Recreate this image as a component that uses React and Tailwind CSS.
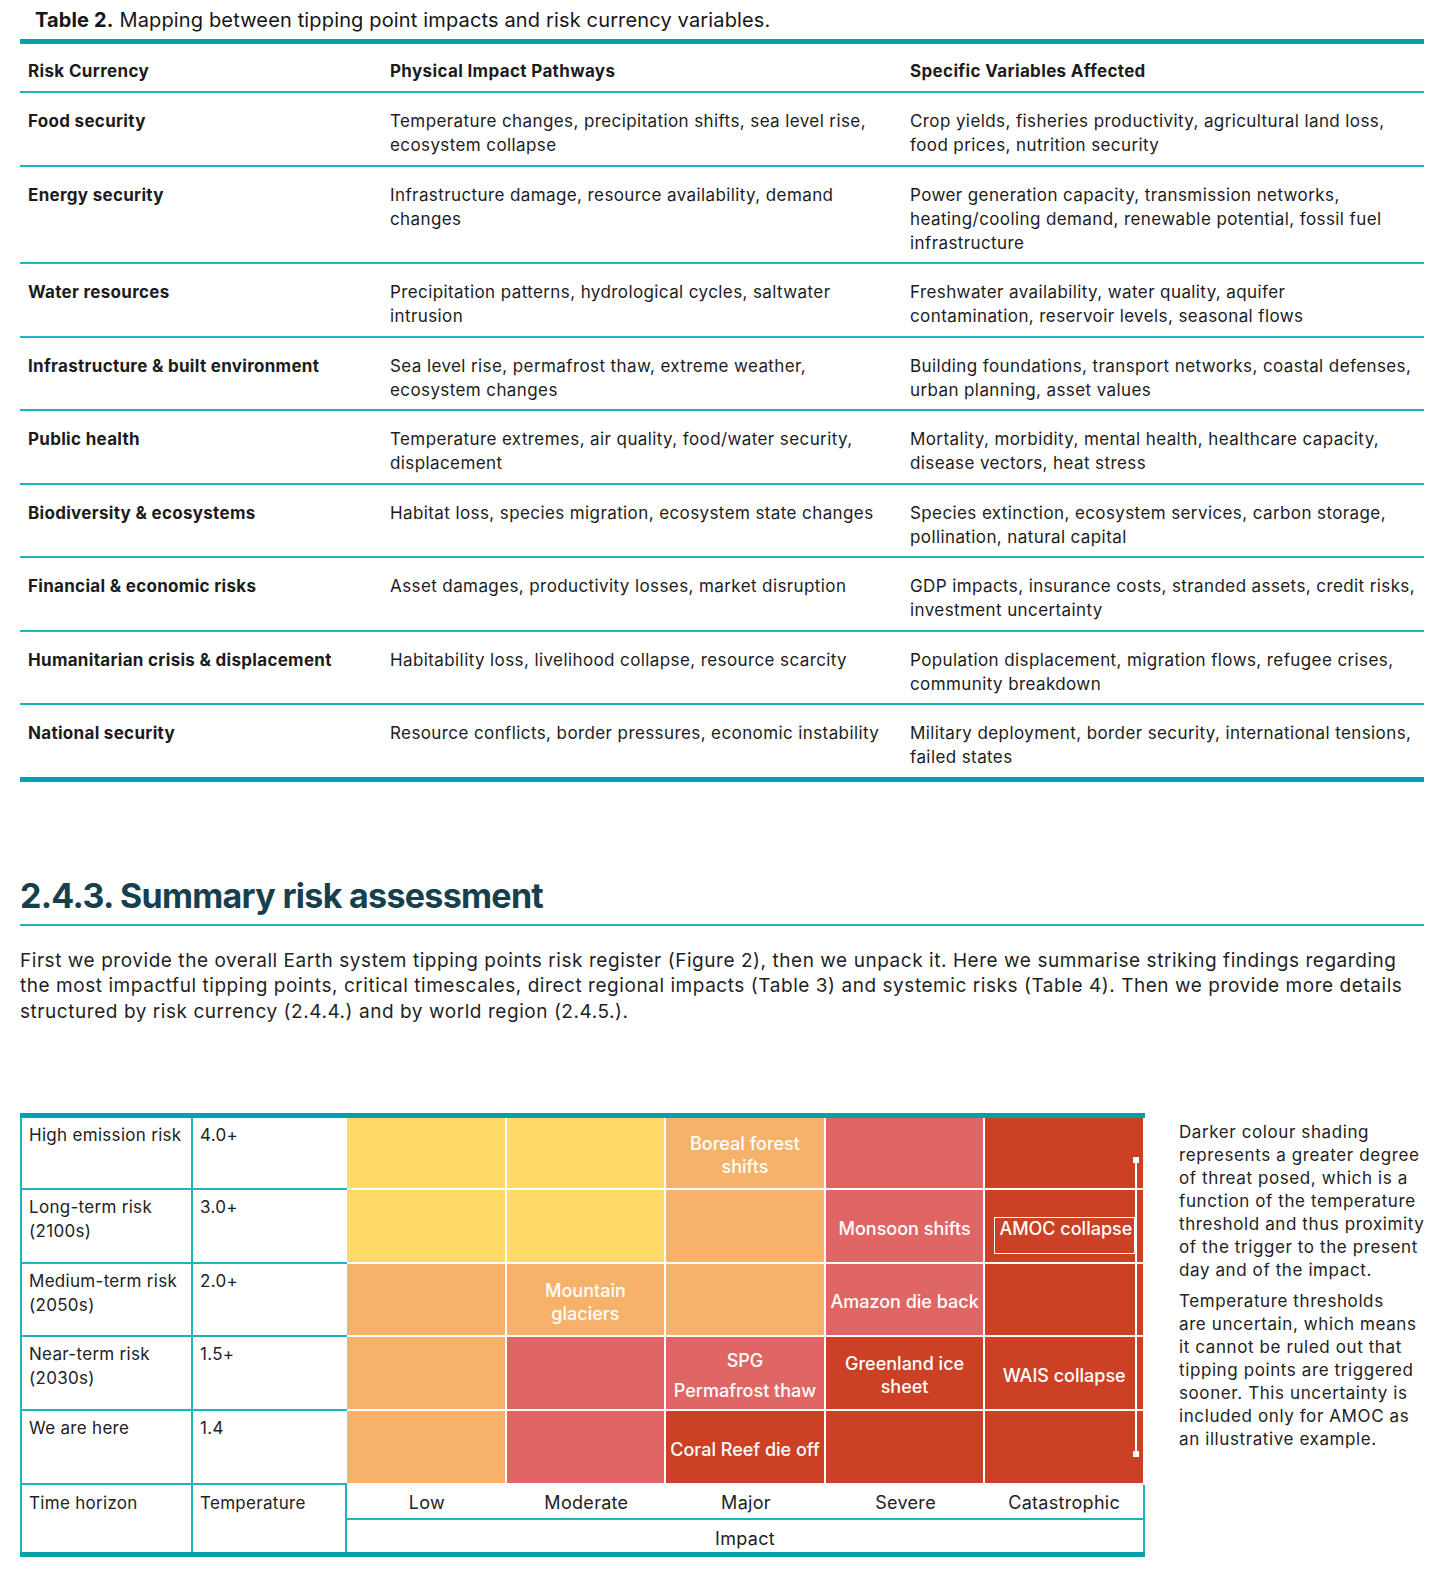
import React from "react";

const rows = [
  ["Food security", ["Temperature changes, precipitation shifts, sea level rise,", "ecosystem collapse"], ["Crop yields, fisheries productivity, agricultural land loss,", "food prices, nutrition security"]],
  ["Energy security", ["Infrastructure damage, resource availability, demand", "changes"], ["Power generation capacity, transmission networks,", "heating/cooling demand, renewable potential, fossil fuel", "infrastructure"]],
  ["Water resources", ["Precipitation patterns, hydrological cycles, saltwater", "intrusion"], ["Freshwater availability, water quality, aquifer", "contamination, reservoir levels, seasonal flows"]],
  ["Infrastructure & built environment", ["Sea level rise, permafrost thaw, extreme weather,", "ecosystem changes"], ["Building foundations, transport networks, coastal defenses,", "urban planning, asset values"]],
  ["Public health", ["Temperature extremes, air quality, food/water security,", "displacement"], ["Mortality, morbidity, mental health, healthcare capacity,", "disease vectors, heat stress"]],
  ["Biodiversity & ecosystems", ["Habitat loss, species migration, ecosystem state changes"], ["Species extinction, ecosystem services, carbon storage,", "pollination, natural capital"]],
  ["Financial & economic risks", ["Asset damages, productivity losses, market disruption"], ["GDP impacts, insurance costs, stranded assets, credit risks,", "investment uncertainty"]],
  ["Humanitarian crisis & displacement", ["Habitability loss, livelihood collapse, resource scarcity"], ["Population displacement, migration flows, refugee crises,", "community breakdown"]],
  ["National security", ["Resource conflicts, border pressures, economic instability"], ["Military deployment, border security, international tensions,", "failed states"]],
];

const colors = {
  y: "bg-[#ffd966]",
  o: "bg-[#f6b26b]",
  s: "bg-[#e06666]",
  r: "bg-[#cc4125]",
};

const matrix = [
  { time: ["High emission risk"], temp: "4.0+", cells: [["y"], ["y"], ["o", ["Boreal forest", "shifts"]], ["s"], ["r"]] },
  { time: ["Long-term risk", "(2100s)"], temp: "3.0+", cells: [["y"], ["y"], ["o"], ["s", ["Monsoon shifts"]], ["r", null, true]] },
  { time: ["Medium-term risk", "(2050s)"], temp: "2.0+", cells: [["o"], ["o", ["Mountain", "glaciers"]], ["o"], ["s", ["Amazon die back"]], ["r"]] },
  { time: ["Near-term risk", "(2030s)"], temp: "1.5+", cells: [["o"], ["s"], ["s", null, false, true], ["r", ["Greenland ice", "sheet"]], ["r", ["WAIS collapse"]]] },
  { time: ["We are here"], temp: "1.4", cells: [["o"], ["s"], ["r", ["Coral Reef die off"]], ["r"], ["r"]] },
];

const Lines = ({ lines }) => lines.map((l, i) => <div key={i} className="whitespace-nowrap">{l}</div>);

const MatrixCell = ({ c, text, amoc, spg }) => {
  if (amoc) {
    return (
      <div className={`${colors[c]} border-r-2 border-b-2 border-white pl-[9px] pt-[27px]`}>
        <div className="w-[141px] h-[37px] border-[1.5px] border-white pl-[4px] text-white text-[18px] leading-[22px] tracking-normal font-medium whitespace-nowrap">
          AMOC collapse
        </div>
      </div>
    );
  }
  return (
    <div className={`${colors[c]} border-r-2 border-b-2 border-white flex flex-col items-center justify-center text-center text-white text-[18px] leading-[23px] tracking-normal font-medium`}>
      {spg ? (
        <div className="flex flex-col gap-[7px] pt-[4px]">
          <div>SPG</div>
          <div className="whitespace-nowrap">Permafrost thaw</div>
        </div>
      ) : text ? (
        <div className="pt-[4px]"><Lines lines={text} /></div>
      ) : null}
    </div>
  );
};

export default function App() {
  return (
    <div className="w-[1448px] min-h-[1572px] bg-white pl-5 text-[#1c1c1c]" style={{ fontFamily: "Inter, 'Liberation Sans', sans-serif" }}>
      {/* Table 2 */}
      <div className="w-[1404px]">
        <div className="pl-[15px] pt-[7px] pb-[6px] text-[20px] leading-[26px] tracking-[0.15px] text-[#161616]">
          <span className="font-bold">Table 2.</span> Mapping between tipping point impacts and risk currency variables.
        </div>
        <div className="h-[5px] bg-[#05a1a8]" />
        <div className="grid grid-cols-[362px_520px_522px] border-b-2 border-[#1fb4bd] text-[17px] leading-[24px] tracking-[0.35px] font-bold pt-[15px] pb-[8px]">
          <div className="pl-2">Risk Currency</div>
          <div className="pl-2">Physical Impact Pathways</div>
          <div className="pl-2">Specific Variables Affected</div>
        </div>
        {rows.map(([name, impact, vars], i) => (
          <div
            key={name}
            className={`grid grid-cols-[362px_520px_522px] text-[17px] leading-[24px] tracking-[0.4px] pt-4 pb-[7.5px] ${i === rows.length - 1 ? "border-b-[5px] border-[#05a1a8]" : "border-b-2 border-[#1fb4bd]"}`}
          >
            <div className="pl-2 font-bold tracking-[0.3px]">{name}</div>
            <div className="pl-2"><Lines lines={impact} /></div>
            <div className="pl-2"><Lines lines={vars} /></div>
          </div>
        ))}
      </div>

      {/* Section heading */}
      <div className="w-[1404px] mt-[93px] border-b-2 border-[#1fb4bd] pb-[7px]">
        <h2 className="text-[34px] leading-[42px] font-bold tracking-[-0.7px] text-[#16404d]">2.4.3. Summary risk assessment</h2>
      </div>
      <p className="w-[1404px] mt-[22px] text-[19px] leading-[25.5px] tracking-[0.55px] text-[#1f1f1f]">
        <span className="block whitespace-nowrap">First we provide the overall Earth system tipping points risk register (Figure 2), then we unpack it. Here we summarise striking findings regarding</span>
        <span className="block whitespace-nowrap">the most impactful tipping points, critical timescales, direct regional impacts (Table 3) and systemic risks (Table 4). Then we provide more details</span>
        <span className="block whitespace-nowrap">structured by risk currency (2.4.4.) and by world region (2.4.5.).</span>
      </p>

      {/* Figure */}
      <div className="mt-[89px] flex items-start gap-[34px]">
        <div className="w-[1125px]">
          <div className="h-[5px] bg-[#05a1a8]" />
          <div className="relative grid grid-cols-[173px_154px_repeat(5,159.6px)] grid-rows-[72px_74px_73px_74px_74px_35px_32px] text-[17px] leading-[23.5px] tracking-[0.3px] text-[#222]">
            {matrix.map((r) => (
              <React.Fragment key={r.temp}>
                <div className="border-l-2 border-r-2 border-b-2 border-[#1fb4bd] pl-[7px] pt-[6px]"><Lines lines={r.time} /></div>
                <div className="border-b-2 border-[#1fb4bd] pl-[7px] pt-[6px]">{r.temp}</div>
                {r.cells.map(([c, text, amoc, spg], j) => (
                  <MatrixCell key={j} c={c} text={text} amoc={amoc} spg={spg} />
                ))}
              </React.Fragment>
            ))}
            <div className="row-span-2 border-l-2 border-r-2 border-[#1fb4bd] pl-[7px] pt-[7px]">Time horizon</div>
            <div className="row-span-2 border-r-2 border-[#1fb4bd] pl-[7px] pt-[7px]">Temperature</div>
            {["Low", "Moderate", "Major", "Severe", "Catastrophic"].map((l, i) => (
              <div key={l} className={`border-b-2 border-[#1fb4bd] flex items-center justify-center pt-[3px] text-[18px] ${i === 4 ? "border-r-2" : ""}`}>{l}</div>
            ))}
            <div className="col-span-5 border-r-2 border-[#1fb4bd] flex items-center justify-center pt-[6px] text-[18px]">Impact</div>

            {/* AMOC uncertainty range */}
            <div className="absolute left-[1113px] top-[39px] w-[6px] h-[300px] flex flex-col items-center">
              <div className="w-[6px] h-[6px] bg-white" />
              <div className="w-[2px] flex-1 bg-white" />
              <div className="w-[6px] h-[6px] bg-white" />
            </div>
          </div>
          <div className="h-[5px] bg-[#05a1a8]" />
        </div>
        <div className="w-[260px] pt-[8px] text-[17px] leading-[23px] tracking-[0.6px] text-[#222]">
          <Lines lines={["Darker colour shading", "represents a greater degree", "of threat posed, which is a", "function of the temperature", "threshold and thus proximity", "of the trigger to the present", "day and of the impact."]} />
          <div className="mt-[8px]">
            <Lines lines={["Temperature thresholds", "are uncertain, which means", "it cannot be ruled out that", "tipping points are triggered", "sooner. This uncertainty is", "included only for AMOC as", "an illustrative example."]} />
          </div>
        </div>
      </div>
    </div>
  );
}
